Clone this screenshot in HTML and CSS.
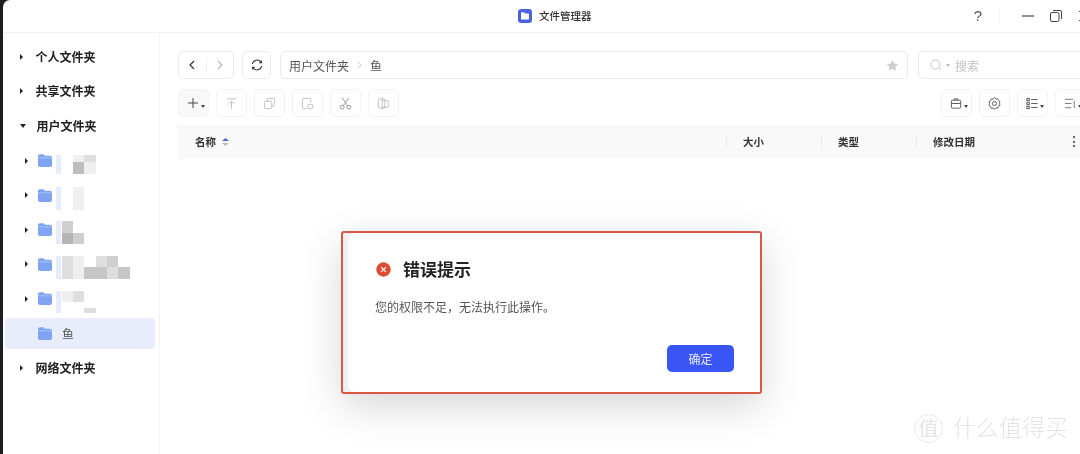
FILE: index.html
```html
<!DOCTYPE html>
<html lang="zh-CN">
<head>
<meta charset="utf-8">
<title>文件管理器</title>
<link rel="stylesheet" href="styles.css">
</head>
<body>
<div class="window">
  <header class="titlebar">
    <div class="app-title">
      <svg class="app-icon" viewBox="0 0 14 14"><rect width="14" height="14" rx="3.2" fill="#4a63e0"/><path d="M3 4.200c0-.5.4-.9.9-.9h2.200l1 1.100h3c.5 0 .9.4.9.9v4.400c0 .5-.4.9-.9.9H3.900c-.5 0-.9-.4-.9-.9z" fill="#fff"/></svg>
      <span>文件管理器</span>
    </div>
    <div class="win-controls">
      <span class="help">?</span>
      <span class="win-sep"></span>
      <svg class="win-icon" viewBox="0 0 12 12"><path d="M0 6h12" stroke="#444" stroke-width="1.200"/></svg>
      <svg class="win-icon" viewBox="0 0 12 12" fill="none" stroke="#444"><rect x=".5" y="2.500" width="8.500" height="9" rx="1.500"/><path d="M3 .5h7a1.500 1.500 0 0 1 1.500 1.500v7"/></svg>
      <svg class="win-icon" viewBox="0 0 12 12" stroke="#444"><path d="M1 1l10 10M11 1L1 11"/></svg>
    </div>
  </header>
  <div class="body">
    <aside class="sidebar">
      <div class="root-row"><i class="arrow"></i><span>个人文件夹</span></div>
      <div class="root-row"><i class="arrow"></i><span>共享文件夹</span></div>
      <div class="root-row"><i class="arrow down"></i><span>用户文件夹</span></div>
      <div class="child-row"><i class="arrow"></i>
        <svg class="folder" viewBox="0 0 14 13"><use href="#folder-shape"/></svg>
        <div class="mosaic tri short"><b class="strip"></b><i></i><i class="m0 s1"></i><i class="m0 s2"></i><i></i><i class="s5"></i><i class="s1"></i></div>
      </div>
      <div class="child-row"><i class="arrow"></i>
        <svg class="folder" viewBox="0 0 14 13"><use href="#folder-shape"/></svg>
        <div class="mosaic"><b class="strip"></b><i></i><i class="s1"></i><i></i><i class="s1"></i></div>
      </div>
      <div class="child-row"><i class="arrow"></i>
        <svg class="folder" viewBox="0 0 14 13"><use href="#folder-shape"/></svg>
        <div class="mosaic"><b class="strip"></b><i class="s3"></i><i></i><i class="s5b"></i><i class="s3"></i></div>
      </div>
      <div class="child-row"><i class="arrow"></i>
        <svg class="folder" viewBox="0 0 14 13"><use href="#folder-shape"/></svg>
        <div class="mosaic wide"><b class="strip"></b><i class="s2"></i><i class="s1"></i><i></i><i class="s2"></i><i class="s3"></i><i></i><i class="s2"></i><i class="s1"></i><i class="s4"></i><i class="s4"></i><i class="s2"></i><i class="s4"></i></div>
      </div>
      <div class="child-row"><i class="arrow"></i>
        <svg class="folder" viewBox="0 0 14 13"><use href="#folder-shape"/></svg>
        <div class="mosaic tri"><b class="strip"></b><i class="s1"></i><i class="s2"></i><i></i><i></i><i></i><i class="low s2"></i></div>
      </div>
      <div class="child-row selected">
        <svg class="folder" viewBox="0 0 14 13"><use href="#folder-shape"/></svg>
        <span class="fish">鱼</span>
      </div>
      <div class="root-row"><i class="arrow"></i><span>网络文件夹</span></div>
    </aside>
    <main class="main">
      <div class="nav-row">
        <div class="box nav-group">
          <button class="plain"><svg viewBox="0 0 12 12" fill="none" stroke="#333" stroke-width="1.200"><path d="M8 2L4 6l4 4"/></svg></button>
          <span class="nav-sep"></span>
          <button class="plain"><svg viewBox="0 0 12 12" fill="none" stroke="#b8b8b8" stroke-width="1.200"><path d="M4 2l4 4-4 4"/></svg></button>
        </div>
        <div class="box refresh">
          <svg viewBox="0 0 12 12" fill="none" stroke="#333" stroke-width="1.100"><path d="M1.300 5a4.800 4.800 0 0 1 8.700-1.800M10.700 7a4.800 4.800 0 0 1-8.700 1.800"/><path d="M10.400 1.400v2.200H8.300M1.600 10.600V8.400h2.100"/></svg>
        </div>
        <div class="box path">
          <span>用户文件夹</span>
          <svg class="crumb" viewBox="0 0 6 10" fill="none" stroke="#bbb"><path d="M1 1l4 4-4 4"/></svg>
          <span>鱼</span>
          <svg class="star" viewBox="0 0 14 14"><path d="M7 .8l1.900 4 4.300.5-3.200 3 .9 4.400L7 10.500l-3.900 2.200.9-4.400-3.200-3 4.300-.5z" fill="#cdcdcd"/></svg>
        </div>
        <div class="box search">
          <svg class="search-icon" viewBox="0 0 14 12" fill="none" stroke="#c6c6c6" stroke-width="1"><circle cx="5.500" cy="5.500" r="4.500"/><path d="M8.800 8.800l2 2"/></svg>
          <i class="caret light"></i>
          <span>搜索</span>
        </div>
      </div>
      <div class="tool-row">
        <button class="tool active"><svg class="plus" viewBox="0 0 10 10" stroke="#444"><path d="M5 0v10M0 5h10"/></svg><i class="caret"></i></button>
        <button class="tool"><svg viewBox="0 0 14 14" fill="none" stroke="#bdbdbd"><path d="M2 2h10M7 12.500V4.500M3.800 7.500L7 4.300l3.200 3.200"/></svg></button>
        <button class="tool"><svg viewBox="0 0 14 14" fill="none" stroke="#bdbdbd"><rect x="1.500" y="4.500" width="8" height="8" rx="1.500"/><path d="M4.500 4.500V3a1.500 1.500 0 0 1 1.500-1.500h5A1.500 1.500 0 0 1 12.500 3v5a1.500 1.500 0 0 1-1.500 1.500H9.500"/></svg></button>
        <button class="tool"><svg viewBox="0 0 14 14" fill="none" stroke="#bdbdbd"><path d="M6 12.500H3A1.500 1.500 0 0 1 1.500 11V3A1.500 1.500 0 0 1 3 1.500h6A1.500 1.500 0 0 1 10.500 3v3"/><rect x="7.500" y="8" width="5" height="4.500" rx="1"/></svg></button>
        <button class="tool"><svg viewBox="0 0 14 14" fill="none" stroke="#8f8f8f"><circle cx="3.500" cy="11" r="2"/><circle cx="10.500" cy="11" r="2"/><path d="M4.700 9.400L10.500 1M9.300 9.400L3.500 1"/></svg></button>
        <button class="tool"><svg viewBox="0 0 14 14" fill="none" stroke="#bdbdbd"><rect x="1.500" y="2" width="7" height="10" rx="1"/><path d="M5.500 4h6a1 1 0 0 1 1 1v5a1 1 0 0 1-1 1h-6M5.500 .5v13"/></svg></button>
        <div class="tool-right">
          <button class="tool"><svg viewBox="0 0 14 14" fill="none" stroke="#555"><rect x="1.500" y="3.500" width="10" height="8.500" rx="1"/><path d="M1.500 7h10M4.500 3.500V2h4v1.500"/></svg><i class="caret"></i></button>
          <button class="tool"><svg viewBox="0 0 14 14" fill="none" stroke="#555"><path d="M7 .8l1.500 1.300 2-.2.7 1.900 1.700 1.100-.5 2 .5 2-1.700 1.100-.7 1.900-2-.2L7 13.200l-1.500-1.300-2 .2-.7-1.900-1.700-1.100.5-2-.5-2 1.700-1.100.7-1.900 2 .2z" stroke-linejoin="round"/><circle cx="7" cy="7" r="2.200"/></svg></button>
          <button class="tool"><svg viewBox="0 0 14 14" fill="none" stroke="#555"><rect x="1" y="1.500" width="2.500" height="2.500"/><rect x="1" y="5.800" width="2.500" height="2.500"/><rect x="1" y="10" width="2.500" height="2.500"/><path d="M5.500 2.700h7M5.500 7h7M5.500 11.300h7"/></svg><i class="caret"></i></button>
          <button class="tool"><svg viewBox="0 0 14 14" fill="none" stroke="#777"><path d="M1 2.500h9M1 7h7M1 11.500h7M11 4v8"/></svg><i class="caret"></i></button>
        </div>
      </div>
      <div class="table-head">
        <div class="col col-name"><span>名称</span>
          <svg class="sort" viewBox="0 0 7 8"><path d="M3.500 0L7 3H0z" fill="#4c66d8"/><path d="M3.500 8L0 5h7z" fill="#bbb"/></svg>
        </div>
        <div class="col sized"><span>大小</span></div>
        <div class="col sized"><span>类型</span></div>
        <div class="col sized date"><span>修改日期</span></div>
        <div class="kebab"><i></i><i></i><i></i></div>
      </div>
    </main>
  </div>
</div>

<svg class="defs" width="0" height="0"><defs>
  <g id="folder-shape">
    <path d="M0 2.200C0 1 .8.300 2 .3h3.500l1.400 1.400H12c1.200 0 2 .8 2 2V11c0 1.200-.8 2-2 2H2c-1.200 0-2-.8-2-2z" fill="#7fa4f4"/>
    <path d="M0 3.300h14v1H0z" fill="#a9c2f8"/>
  </g>
</defs></svg>

<section class="dialog">
  <div class="card">
    <h2 class="dlg-title">
      <svg class="err" viewBox="0 0 16 16"><circle cx="8" cy="8" r="7.700" fill="#dd4b33"/><path d="M5.400 5.400l5.200 5.200M10.600 5.400l-5.200 5.200" stroke="#fff" stroke-width="1.300"/></svg>
      <span>错误提示</span>
    </h2>
    <p class="dlg-msg">您的权限不足，无法执行此操作。</p>
    <div class="dlg-actions"><button class="ok">确定</button></div>
  </div>
</section>

<div class="watermark">
  <span class="wm-logo">值</span>
  <span class="wm-text">什么值得买</span>
</div>
</body>
</html>
```
FILE: styles.css
```css
* { box-sizing: border-box; }
html, body { margin: 0; height: 454px; overflow: hidden; }
body {
  position: relative;
  width: 1080px;
  background: #1d1d24;
  font-family: "Noto Sans CJK SC", "Noto Sans", sans-serif;
  color: #222;
  filter: blur(.35px);
}
.defs { position: absolute; }
.window {
  margin-left: 3px;
  width: 1097px;
  height: 454px;
  background: #fff;
  border-top-left-radius: 7px;
  display: flex;
  flex-direction: column;
}
.titlebar {
  height: 33px;
  flex: none;
  border-bottom: 1px solid #f1f1f1;
  display: flex;
  align-items: center;
  position: relative;
}
.app-title {
  margin-left: 515px;
  display: flex;
  align-items: center;
  gap: 7px;
  font-size: 10.5px;
  font-weight: 500;
  color: #333;
}
.app-title span { margin-top: -2px; }
.app-icon { width: 14px; height: 14px; }
.win-controls {
  margin-left: auto;
  margin-right: 10px;
  display: flex;
  align-items: center;
  gap: 16px;
}
.help { font-size: 15px; line-height: 16px; color: #555; font-family: "Liberation Sans", sans-serif; margin-right: 1px; }
.win-sep { width: 1px; height: 14px; background: #f2f2f2; margin-right: 6px; margin-left: 0; }
.win-icon { width: 12px; height: 12px; }
.body { flex: 1; display: flex; min-height: 0; }

.sidebar {
  width: 157px;
  flex: none;
  padding: 6.500px 2px 0;
  border-right: 1px solid #f3f3f3;
}
.root-row {
  height: 34.6px;
  display: flex;
  align-items: center;
  padding-left: 15px;
  font-size: 12px;
  font-weight: 700;
  color: #222;
}
.root-row span { margin-top: -1px; }
.root-row .arrow { margin-right: 12.500px; }
.arrow {
  width: 0;
  height: 0;
  flex: none;
  border-left: 3.500px solid #222;
  border-top: 3px solid transparent;
  border-bottom: 3px solid transparent;
}
.root-row .arrow.down {
  border-top: 4px solid #222;
  border-left: 3px solid transparent;
  border-right: 3px solid transparent;
  border-bottom: 0;
  margin-left: -.5px;
  margin-right: 11px;
}
.child-row {
  height: 34.6px;
  display: flex;
  align-items: center;
  padding-left: 20px;
}
.child-row .arrow { margin-right: 9.500px; }
.folder { width: 14px; height: 13px; flex: none; }
.child-row.selected {
  height: 31px;
  margin: 1.800px 0;
  width: 150px;
  padding-left: 33px;
  background: #e8edfb;
  border-radius: 4px;
}
.fish { margin-left: 10px; font-size: 12px; color: #555; }

.mosaic {
  position: relative;
  display: grid;
  grid-template-columns: repeat(2, 11.400px);
  grid-auto-rows: 11.400px;
  margin-left: 4px;
  padding-left: 6px;
  margin-top: 6px;
}
.mosaic.wide { grid-template-columns: repeat(6, 11.400px); }
.mosaic.tri { grid-template-columns: repeat(3, 11.400px); }
.mosaic.short { grid-template-rows: 7.500px 11.400px; margin-top: 7px; }
.strip { position: absolute; left: 0; top: 0; bottom: 0; width: 5px; background: #e5ecfb; }
.s1 { background: #efefef; }
.s2 { background: #dedede; }
.s3 { background: #cfcfcf; }
.s4 { background: #c6c6c6; }
.s5 { background: #bdbdbd; }
.s5b { background: #b4b4b4; }
.low { height: 5.500px; align-self: end; }

.main { width: 940px; flex: none; padding: 18px 0 0 17px; }
.nav-row { display: flex; gap: 9px; height: 28px; margin-left: 1px; }
.box {
  border: 1px solid #ebebeb;
  border-radius: 5px;
  background: #fff;
  display: flex;
  align-items: center;
}
.nav-group { width: 56px; flex: none; }
.plain {
  flex: 1;
  height: 100%;
  border: 0;
  background: none;
  padding: 0;
  display: flex;
  align-items: center;
  justify-content: center;
}
.plain svg { width: 12px; height: 12px; }
.nav-sep { width: 1px; height: 14px; background: #f0f0f0; }
.refresh { width: 29px; flex: none; justify-content: center; margin-left: -1px; }
.refresh svg { width: 12px; height: 12px; }
.path {
  width: 628px;
  flex: none;
  padding: 0 8px 0 8px;
  font-size: 12px;
  color: #555;
  gap: 8px;
}
.path span { margin-top: 1px; }
.crumb { width: 5px; height: 8px; }
.star { width: 13px; height: 13px; margin-left: auto; }
.search {
  width: 182px;
  flex: none;
  margin-left: 1px;
  padding-left: 11px;
  font-size: 12px;
  color: #c2c2c2;
}
.search-icon { width: 14px; height: 12px; }
.search span { margin-left: 5px; }
.caret {
  display: block;
  width: 0;
  height: 0;
  border-top: 3px solid #444;
  border-left: 2px solid transparent;
  border-right: 2px solid transparent;
}
.caret.light { border-top-color: #bbb; margin-left: 2px; }

.tool-row { display: flex; gap: 7px; height: 28px; margin: 10px 0 0 1px; width: 908px; }
.tool-right { margin-left: auto; display: flex; gap: 7px; }
.tool {
  position: relative;
  width: 31px;
  height: 28px;
  flex: none;
  padding: 0;
  border: 1px solid #f3f3f3;
  border-radius: 5px;
  background: #fff;
  display: flex;
  align-items: center;
  justify-content: center;
}
.tool.active { background: #f8f8f8; }
.tool svg { width: 13px; height: 13px; }
.tool svg.plus { width: 10px; height: 10px; margin-right: 1px; }
.tool .caret { position: absolute; right: 3px; bottom: 8px; }

.table-head {
  margin-top: 8px;
  height: 34px;
  background: #f9f9f9;
  display: grid;
  grid-template-columns: 549px 95px 95px 1fr;
  align-items: center;
  font-size: 10.5px;
  font-weight: 700;
  color: #333;
  position: relative;
}
.col { display: flex; align-items: center; height: 12px; }
.col span { margin-top: -2px; }
.col-name { padding-left: 18px; gap: 6px; }
.sized { border-left: 1px solid #e9e9e9; padding-left: 16px; }
.sort { width: 7px; height: 8px; }
.kebab {
  position: absolute;
  left: 896px;
  top: 11px;
  display: flex;
  flex-direction: column;
  gap: 2.500px;
}
.kebab i { width: 2px; height: 2px; background: #333; border-radius: 50%; }

.dialog {
  position: absolute;
  left: 341px;
  top: 231px;
  width: 421px;
  height: 163px;
  border: 2px solid #d95a44;
  border-radius: 3px;
  background: #f0f0f0;
  padding-left: 5px;
  box-shadow: 0 12px 40px rgba(0, 0, 0, .16);
}
.card {
  height: 100%;
  background: #fff;
  border-radius: 7px 0 0 7px;
  padding: 0 26px 20px 28px;
  display: flex;
  flex-direction: column;
}
.dlg-title {
  margin: 22px 0 0;
  height: 27px;
  display: flex;
  align-items: center;
  gap: 12px;
  font-size: 17px;
  font-weight: 700;
  color: #222;
}
.dlg-title span { margin-top: -1px; }
.err { width: 15px; height: 15px; margin-top: 1px; }
.dlg-msg { margin: 16px 0 0 -1px; font-size: 12px; line-height: 17px; color: #555; }
.dlg-actions { margin-top: auto; display: flex; justify-content: flex-end; }
.ok {
  width: 67px;
  height: 27px;
  border: 0;
  border-radius: 5px;
  background: #3a55f6;
  color: #e9ecff;
  font: 12px "Noto Sans CJK SC", sans-serif;
}

.watermark {
  position: absolute;
  left: 914px;
  top: 414px;
  display: flex;
  align-items: center;
  gap: 10px;
  color: #e4e4e4;
}
.wm-logo {
  width: 29px;
  height: 29px;
  border: 1px solid #e8e8e8;
  border-radius: 50%;
  font-size: 20px;
  line-height: 25px;
  text-align: center;
}
.wm-text { font-size: 23px; line-height: 25px; height: 29px; font-weight: 300; }
```
